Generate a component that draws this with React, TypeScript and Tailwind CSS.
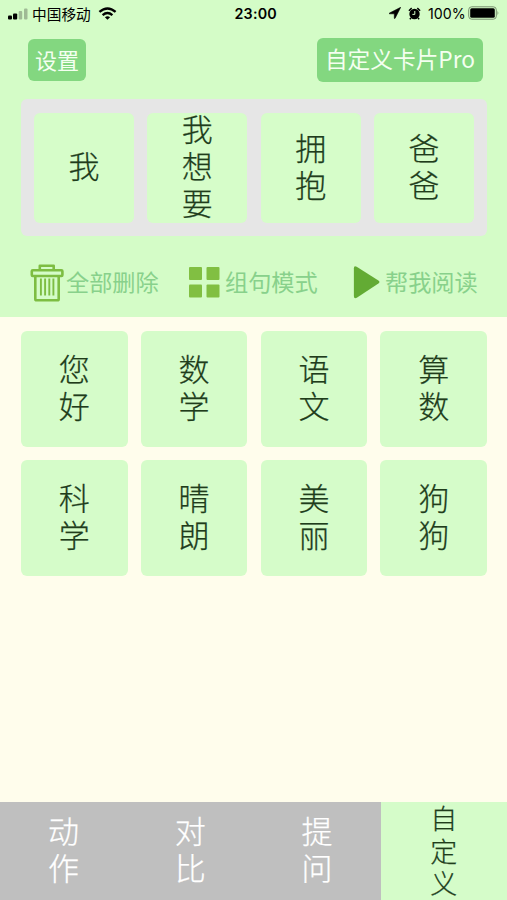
import React from 'react';

const sentence = ['我', '我想要', '拥抱', '爸爸'];
const words = ['您好', '数学', '语文', '算数', '科学', '晴朗', '美丽', '狗狗'];
const tabs = ['动作', '对比', '提问'];

function Vertical({ text }: { text: string }) {
  return (
    <span className="-mt-1 block w-[31px] text-[31px] leading-[36.7px] font-light break-all [-webkit-text-stroke:0.25px]">
      {text}
    </span>
  );
}

function StatusBar() {
  return (
    <div className="flex h-7 items-center pl-[7px] pr-[5px] text-black">
      <svg className="h-3 w-[22px] shrink-0" viewBox="0 0 22 12">
        <rect x="1" y="7.5" width="4" height="4" rx="1" />
        <rect x="6" y="5.5" width="4.2" height="6" rx="1" />
        <rect x="11.7" y="3" width="3.5" height="8.5" rx="1" fill="#9fba95" />
        <rect x="17" y="0.5" width="3.5" height="11" rx="1" fill="#9fba95" />
      </svg>
      <span className="mb-px ml-[3px] w-[59px] whitespace-nowrap text-[14.7px] leading-[26px]">中国移动</span>
      <svg className="mb-[2px] ml-[7px] h-[13px] w-[19px] shrink-0" viewBox="0 0 19 13" fill="none" stroke="black" strokeWidth="2.4">
        <path d="M1.4 4.9Q9.5-2 17.6 4.9" />
        <path d="M4.6 8.1Q9.5 4 14.4 8.1" />
        <path d="M6.9 10.2Q9.5 8.2 12.1 10.2L9.5 12.8Z" fill="black" stroke="none" />
      </svg>
      <span className="ml-[117.5px] w-12 whitespace-nowrap font-['Inter','Noto_Sans_CJK_SC',sans-serif] text-[14.3px] font-semibold tracking-[0.2px]">23:00</span>
      <svg className="mb-[2px] ml-[106px] h-3 w-3 shrink-0" viewBox="0 0 12 12">
        <path d="M11.7.3.2 6.2Q0 6.8.6 6.8H5.3V11.3Q5.7 12 6.1 11.3Z" stroke="black" strokeWidth="0.6" />
      </svg>
      <svg className="mb-[2px] ml-[7.5px] h-[13px] w-[13px] shrink-0" viewBox="0 0 13 13">
        <circle cx="6.5" cy="7" r="5.2" />
        <path d="M.9 3.7 3.7 1.1M9.3 1.1l2.8 2.6M3 11 1.8 12.2M10 11l1.2 1.2" stroke="black" strokeWidth="1.5" fill="none" />
        <path d="M6.8 4v3.4H4.4" stroke="#d4fcc7" strokeWidth="1" fill="none" />
      </svg>
      <span className="ml-[7px] w-[38px] whitespace-nowrap font-['Inter','Noto_Sans_CJK_SC',sans-serif] text-[14.2px]">100%</span>
      <svg className="mb-[2px] ml-[2px] h-[14px] w-8 shrink-0" viewBox="0 0 32 14">
        <rect x="0.7" y="0.8" width="27.6" height="12.4" rx="3" fill="none" stroke="#78906f" strokeWidth="1" />
        <rect x="2.2" y="2.3" width="24.6" height="9.4" rx="1.5" />
        <path d="M29.5 4.8q1.8 2.2 0 4.4z" fill="#78906f" />
      </svg>
    </div>
  );
}

function TrashIcon() {
  return (
    <svg className="h-[38px] w-[34px] shrink-0" viewBox="0 0 34 38" fill="none" stroke="#7dbd42" strokeWidth="2.6" strokeLinejoin="round">
      <path d="M9.8 6V1.8H23.7V6" />
      <rect x="1.8" y="6.2" width="30.6" height="5.8" rx="1" />
      <path d="M5.3 12V35Q5.3 36.3 6.6 36.3H27.4Q28.7 36.3 28.7 35V12" />
      <path d="M10.9 14.5V31.5M15.1 14.5V31.5M19.3 14.5V31.5M23.4 14.5V31.5" strokeWidth="1.9" />
    </svg>
  );
}

export default function App() {
  return (
    <div className="flex h-[900px] w-[507px] flex-col overflow-hidden bg-[#fffdec] font-['Noto_Sans_CJK_SC',sans-serif] text-[#203c1b]">
      <header className="h-[317px] shrink-0 bg-[#d4fcc7]">
        <StatusBar />
        <div className="flex h-[71px] items-start justify-between pt-[10px] pl-7 pr-6 text-[#f4fff0]">
          <button className="mt-px h-[42px] w-[58px] rounded-md bg-[#83d780] pb-[2px] text-[22px] leading-10 whitespace-nowrap">设置</button>
          <button className="h-[44px] w-[166px] rounded-md bg-[#83d780] pb-[2px] text-[22.7px] leading-[42px] whitespace-nowrap">自定义卡片Pro</button>
        </div>
        <div className="mx-[21px] grid h-[137px] w-[466px] grid-cols-4 grid-rows-[110px] gap-[13.3px] rounded-md bg-[#e6e6e6] px-[13px] py-[13.5px]">
          {sentence.map((w) => (
            <div key={w} className="flex items-center justify-center rounded-md bg-[#d6fdc9]">
              <Vertical text={w} />
            </div>
          ))}
        </div>
        <div className="flex h-[81px] items-center pt-[12px] pl-[30px] text-[23.2px] leading-9 whitespace-nowrap text-[#88d18b]">
          <button className="flex w-[158px] items-center gap-[2px]">
            <TrashIcon />
            <span className="mb-[3px]">全部删除</span>
          </button>
          <button className="flex w-[165px] items-center gap-[5px]">
            <svg className="mb-[2px] h-8 w-8 shrink-0" viewBox="0 0 32 32" fill="#81bf42">
              <rect x="1" y="1" width="13" height="13" rx="1" />
              <rect x="18.5" y="1" width="13" height="13" rx="1" />
              <rect x="1" y="18.5" width="13" height="13" rx="1" />
              <rect x="18.5" y="18.5" width="13" height="13" rx="1" />
            </svg>
            <span className="mb-[3px]">组句模式</span>
          </button>
          <button className="flex items-center gap-[5px]">
            <svg className="mb-px h-[34px] w-[27px] shrink-0" viewBox="0 0 27 34" fill="#63ab34">
              <path d="M.9 3.2Q.9.1 3.7 1.7L25.4 15.4Q27.5 17 25.4 18.6L4.2 32.5Q.9 34.4.9 31Z" />
            </svg>
            <span className="mb-[3px]">帮我阅读</span>
          </button>
        </div>
      </header>
      <main className="grow px-[21px] pt-[13.7px]">
        <div className="grid w-[466px] grid-cols-4 gap-x-[13.3px] gap-y-[12.3px]">
          {words.map((w) => (
            <div key={w} className="flex h-[116.7px] items-center justify-center rounded-md bg-[#d5fcc9]">
              <Vertical text={w} />
            </div>
          ))}
        </div>
      </main>
      <nav className="flex h-[98px] shrink-0">
        <div className="grid w-[380.5px] shrink-0 grid-cols-3 bg-[#bfbfbf] text-white">
          {tabs.map((t) => (
            <div key={t} className="flex items-center justify-center">
              <Vertical text={t} />
            </div>
          ))}
        </div>
        <div className="flex grow justify-center bg-[#d5fcc9]">
          <span className="block h-[98px] w-[27px] text-[27px] leading-[32.5px] font-light break-all [-webkit-text-stroke:0.25px]">自定义</span>
        </div>
      </nav>
    </div>
  );
}
